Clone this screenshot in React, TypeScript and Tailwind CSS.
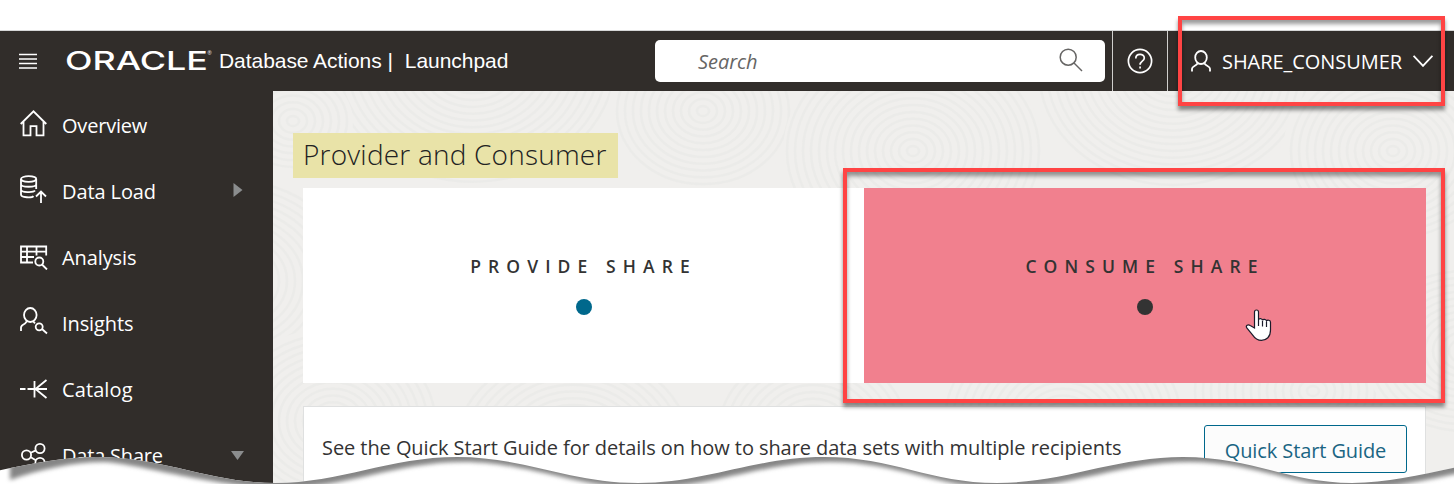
import React from "react";

const segoe = "font-['Open_Sans','Noto_Sans',sans-serif]";

function Stroke({ w, h, sw = 1.8, className = "", children }: { w: number; h: number; sw?: number; className?: string; children: React.ReactNode }) {
  return (
    <svg width={w} height={h} viewBox={`0 0 ${w} ${h}`} fill="none" stroke="currentColor" strokeWidth={sw} className={`shrink-0 ${className}`}>
      {children}
    </svg>
  );
}

const icons: Record<string, React.ReactNode> = {
  home: <path d="M.7 14 13.5 1.3 26.3 14M3.5 12v13.3h7V16.2h6v9.1h7V12" />,
  load: (
    <>
      <ellipse cx="8.6" cy="4" rx="7.6" ry="2.8" />
      <path d="M1 4v15.5c0 3.4 11 3.4 12.5 1.6M16.2 4v10M1 9.2c0 3.4 15.2 3.4 15.2 0M1 14.4c0 3.4 12.5 3.4 14 1.2M21 28V17.5M16 21.5l5-5 5 5" />
    </>
  ),
  analysis: (
    <>
      <path d="M13 17.5H1V1.5h25.2v9M1 6.7h25.2M1 12h13M7 1.5v16M16.5 1.5v9" />
      <circle cx="19.3" cy="16.5" r="4" />
      <path d="m22 19.5 5 5" />
    </>
  ),
  insights: (
    <>
      <ellipse cx="10.3" cy="8" rx="6.3" ry="7" />
      <path d="M1 24v-3.5c0-2 2-3 4-4l2-2.3M13 14.2l2 2.2M22 22l5 4.5" />
      <circle cx="19.2" cy="19.8" r="3.5" />
    </>
  ),
  catalog: <path d="M0 10h5.5M7.5 10H27M14.5 2v16.5M26.5 1 15.5 10l11 9" />,
  share: (
    <>
      <circle cx="6.5" cy="13" r="4.6" />
      <circle cx="20" cy="6.5" r="4.6" />
      <circle cx="20" cy="20.5" r="4.6" />
      <path d="m10.8 10.8 5-2.4M10.8 15.2l5 3" />
    </>
  ),
};

const menu = [
  { id: "home", label: "Overview", h: 27, text: "tracking-[-0.2px]", icon: "mt-[-4px]" },
  { id: "load", label: "Data Load", h: 29, text: "tracking-[-0.1px]", icon: "mt-[-3px]", arrow: "right" },
  { id: "analysis", label: "Analysis", h: 25, text: "tracking-[-0.1px]", icon: "" },
  { id: "insights", label: "Insights", h: 28, text: "tracking-[-0.1px]", icon: "mt-[-4px]" },
  { id: "catalog", label: "Catalog", h: 21, text: "tracking-[0.1px]", icon: "" },
  { id: "share", label: "Data Share", h: 27, text: "tracking-[-0.2px]", icon: "mt-[1px]", arrow: "down" },
];

function Header() {
  return (
    <header className="flex h-[61px] shrink-0 border-t border-[#d5d6d6] bg-[#312d2a] text-white">
      <div className="flex w-[655px] items-center pl-[19px]">
        <Stroke w={18} h={17} sw={1.3}>
          <path d="M0 1.500h18M0 6h18M0 10.500h18M0 15h18" />
        </Stroke>
        <svg width="150" height="40" className="ml-[27px] shrink-0 overflow-visible fill-white">
          <text x="1" y="28.8" textLength="143" lengthAdjust="spacingAndGlyphs" className="font-['Inter',sans-serif] text-[25.5px] leading-none font-medium">ORACLE</text>
          <text x="143.5" y="14" className="font-['Liberation_Sans',sans-serif] text-[5.5px] leading-none">®</text>
        </svg>
        <div className="ml-[5px] font-['Liberation_Sans',sans-serif] text-[21px] tracking-[-0.05px] whitespace-pre">
          Database Actions |<span className="ml-[12px]">Launchpad</span>
        </div>
      </div>
      <div className="mt-[9px] flex h-[42px] w-[450px] shrink-0 items-center justify-between rounded-[5px] bg-white pr-[22px] pl-[43px] text-[#666564]">
        <span className="mt-[2px] text-[20px] tracking-[-0.05px] italic">Search</span>
        <Stroke w={24} h={24} sw={1.5} className="mt-[-2px]">
          <circle cx="9.2" cy="9.2" r="8" />
          <path d="m15 15 8 8" />
        </Stroke>
      </div>
      <div className="ml-[7px] flex w-[56px] items-center justify-center border-x border-[#d0cfcd]">
        <Stroke w={26} h={26} sw={1.7}>
          <circle cx="13" cy="13" r="11.6" />
          <path d="M8.8 10.4c0-5.2 8.5-5.2 8.5-.4 0 3.3-4.2 3-4.2 6.7M13.1 18.4v2.2" />
        </Stroke>
      </div>
      <div className="flex flex-1 items-center pl-[23px]">
        <Stroke w={20} h={22} sw={1.8}>
          <ellipse cx="10" cy="7.5" rx="5.8" ry="6.5" />
          <path d="M1 21.5v-2.8c0-2.6 4-2.6 5.7-5.5M19 21.5v-2.8c0-2.6-4-2.6-5.7-5.5" />
        </Stroke>
        <span className="mt-[2px] ml-[11px] w-[183px] text-[20px] tracking-[-0.05px] whitespace-nowrap">SHARE_CONSUMER</span>
        <Stroke w={20} h={12} sw={1.9} className="ml-[8px]">
          <path d="m.6.8 9.4 10 9.4-10" />
        </Stroke>
      </div>
    </header>
  );
}

function Sidebar() {
  return (
    <nav className="w-[273px] shrink-0 bg-[#312d2a] pt-[1px] text-white">
      {menu.map((m) => (
        <div key={m.id} className="flex h-[66px] items-center pr-[29px] pl-[20px]">
          <Stroke w={28} h={m.h} className={m.icon}>{icons[m.id]}</Stroke>
          <span className={`mt-[2px] ml-[14px] text-[20px] ${m.text}`}>{m.label}</span>
          {m.arrow && (
            <svg width="14" height="14" className={`ml-auto fill-[#8b8d8e] ${m.arrow === "right" ? "mt-[-3px]" : "mt-[-1px]"}`}>
              <path d={m.arrow === "right" ? "M3.500 0v14l9-7Z" : "M1 3h13l-6.500 9Z"} />
            </svg>
          )}
        </div>
      ))}
    </nav>
  );
}

const ringCentres = [
  [200, -30, 150],
  [430, 20, 95],
  [-40, 190, 120],
  [640, 60, 130],
  [60, 330, 110],
  [900, -20, 140],
  [300, 360, 120],
  [540, 340, 100],
  [1120, 60, 110],
  [790, 330, 120],
  [1040, 300, 120],
  [20, 30, 60],
  [1190, 260, 100],
];

function Texture() {
  return (
    <svg className="absolute inset-0 h-full w-full" fill="none" stroke="#eae9e7" strokeWidth="2.5">
      {ringCentres.map(([x, y, size]) => (
        <g key={`${x}-${y}`}>
          <ellipse cx={x} cy={y} rx={size} ry={size * 0.85} fill="#f0efed" stroke="none" />
          {Array.from({ length: Math.floor(size / 8) }, (_, i) => (
            <ellipse key={i} cx={x} cy={y} rx={6 + i * 8} ry={(6 + i * 8) * 0.85} opacity={0.75} />
          ))}
        </g>
      ))}
    </svg>
  );
}

function Card({ label, className, dot }: { label: string; className: string; dot: string }) {
  return (
    <div className={`flex h-[195px] flex-col items-center pt-[65px] ${className}`}>
      <span className="text-[17.500px] leading-[26px] font-semibold tracking-[7.1px] whitespace-nowrap text-[#333]">{label}</span>
      <span className={`mt-[20px] size-[16px] rounded-full ${dot}`} />
    </div>
  );
}

const waves =
  "S210 483 275 483S390 457 457 457S570 483 638 483S755 457 824 457S930 483 997 483S1115 457 1183 457S1290 483 1352 483S1470 457 1545 457";

function TornEdge() {
  return (
    <svg width="1454" height="484" className="pointer-events-none absolute top-0 left-0">
      <defs>
        <clipPath id="below">
          <path d={"M-86 483C-30 483 30 457 97 457" + waves + "V500H-86Z"} />
        </clipPath>
        <filter id="soft" x="-5%" y="-5%" width="110%" height="115%">
          <feGaussianBlur stdDeviation="2.2" />
        </filter>
      </defs>
      <g clipPath="url(#below)">
        <rect width="1454" height="484" fill="#fff" />
        <path d={"M4 475C35 464 68 457 97 457" + waves + "V300H4Z"} transform="translate(6 5)" fill="#858585" filter="url(#soft)" />
      </g>
    </svg>
  );
}

export default function App() {
  return (
    <div className={`relative flex h-[484px] w-[1454px] flex-col overflow-hidden bg-white pt-[30px] ${segoe}`}>
      <Header />
      <div className="flex min-h-0 flex-1">
        <Sidebar />
        <main className="relative flex-1 overflow-hidden bg-[#f0efed]">
          <Texture />
          <div className="relative px-[30px] pt-[42px]">
            <h1 className="-ml-[10px] flex h-[45px] w-[325px] items-center bg-[#e9e3a8] pb-[3px] pl-[10px] text-[28px] font-light tracking-[0.2px] whitespace-nowrap text-[#222]">
              Provider and Consumer
            </h1>
            <div className="mt-[10px] flex w-[1123px]">
              <Card label="PROVIDE SHARE" className="w-[561px] bg-white" dot="bg-[#00688c]" />
              <Card label="CONSUME SHARE" className="w-[562px] bg-[#f1808e]" dot="bg-[#333]" />
            </div>
            <div className="mt-[23px] flex h-[100px] w-[1123px] items-start border border-[#dfe0e0] bg-white pl-[18px]">
              <p className="mt-[26px] text-[20px] leading-[30px] tracking-[-0.07px] whitespace-nowrap text-[#333]">
                See the Quick Start Guide for details on how to share data sets with multiple recipients
              </p>
              <button className="mt-[18px] mr-[18px] ml-auto h-[48px] w-[203px] rounded-[3px] border border-[#00688c] bg-[#fcfcfc] pt-[3px] text-[20px] tracking-[-0.1px] whitespace-nowrap text-[#1a6583]">
                Quick Start Guide
              </button>
            </div>
          </div>
        </main>
      </div>
      <div className="absolute top-[16px] left-[1178px] h-[90px] w-[267px] border-4 border-[#ff4444] shadow-[0px_4px_4px_rgba(0,0,0,.45),inset_0px_4px_4px_rgba(0,0,0,.4)]" />
      <div className="absolute top-[168px] left-[843px] h-[235px] w-[602px] border-4 border-[#ff4444] shadow-[0px_4px_4px_rgba(0,0,0,.45),inset_0px_4px_4px_rgba(0,0,0,.4)]" />
      <svg width="28" height="34" viewBox="0 0 28 34" className="absolute top-[308px] left-[1245px]">
        <path d="M9.500 20V4c0-2.700 4-2.700 4 0v8c0-2 3.700-1.800 4 .3.500-1.500 3.700-1.300 4 .7.800-1.300 4-1 4 1.200V22c0 7-4 10.300-9 10.300-4.500 0-7-2.500-9-5.500L1.800 20c-1.500-2.500 1.200-4 3.400-2.500Z" fill="#fff" stroke="#1b1b2a" strokeWidth="1.2" />
        <path d="M13.500 12v6M17.500 13v5.500M21.500 14v5" stroke="#1b1b2a" strokeWidth="1.2" />
      </svg>
      <TornEdge />
    </div>
  );
}
